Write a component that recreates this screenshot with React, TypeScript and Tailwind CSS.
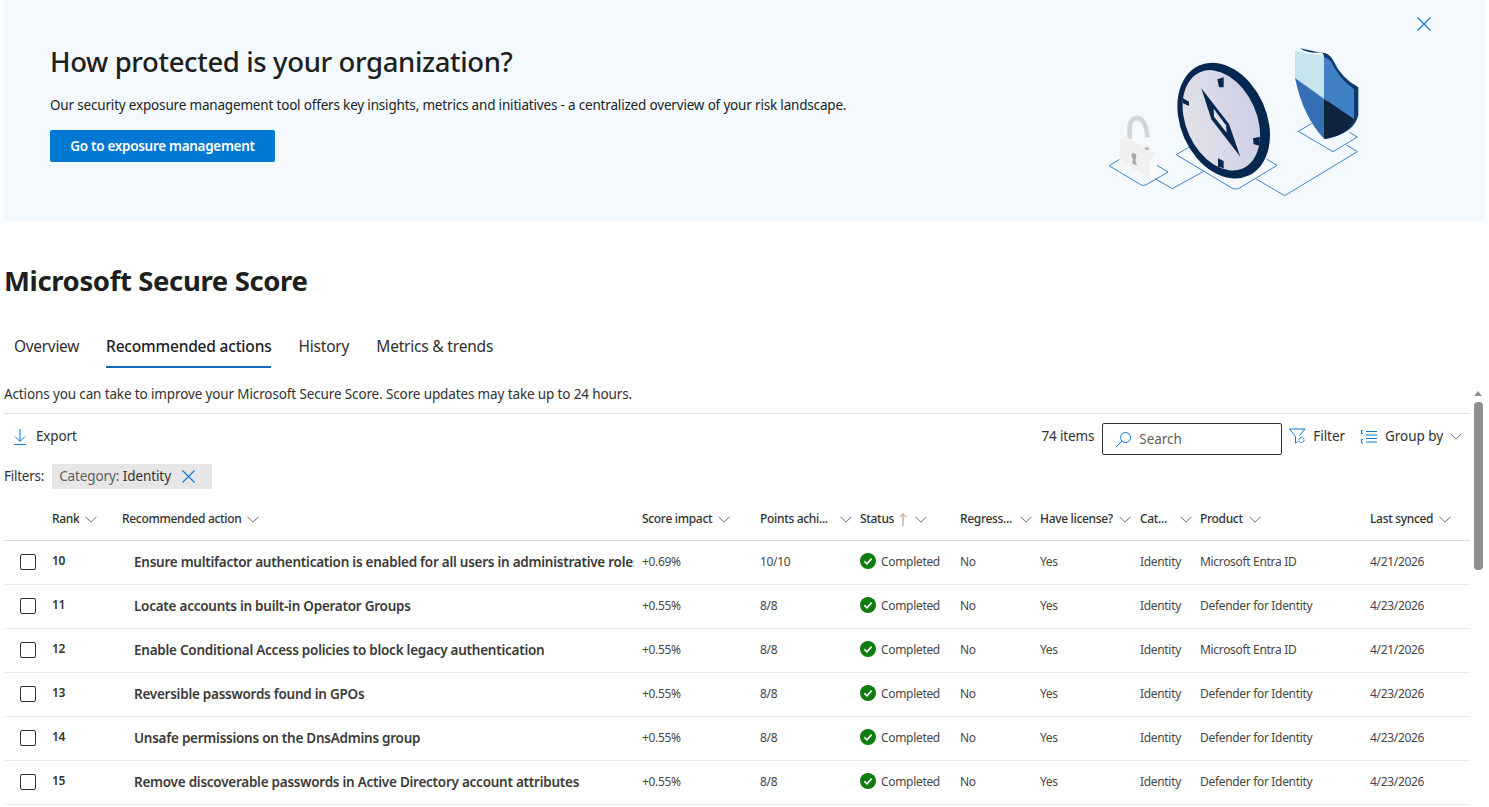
import React from "react";

const Chevron = ({ className = "" }: { className?: string }) => (
  <svg viewBox="0 0 12 7" className={"w-[12px] h-[7px] shrink-0 " + className} fill="none" stroke="currentColor" strokeWidth="0.9">
    <path d="M0.5 0.7 L6 6.2 L11.5 0.7" />
  </svg>
);

const X = ({ size = 13 }: { size?: number }) => (
  <svg width={size} height={size} viewBox="0 0 13 13" fill="none" stroke="#0f78d4" strokeWidth="1.1">
    <path d="M0.5 0.5 L12.5 12.5 M12.5 0.5 L0.5 12.5" />
  </svg>
);

const Illustration = () => (
  <svg viewBox="40 0 780 663" className="w-[260px] h-[221px] shrink-0">
    <defs>
      <linearGradient id="cg" x1="0" y1="0" x2="1" y2="0.3">
        <stop offset="0" stopColor="#e3e3e6" />
        <stop offset="1" stopColor="#cfd2e6" />
      </linearGradient>
    </defs>
    <g fill="none" stroke="#3f83cc" strokeWidth="3" strokeLinejoin="round">
      <path d="M90 478 L58 497 L155 555 Q162 558 170 554 L235 516 L200 495" />
      <path d="M198 537 L248 566 L340 515" />
      <path d="M310 434 L260 464 L428 565 Q438 570 450 564 L562 496 L530 477" />
      <path d="M498 536 L585 587 L803 455 L770 435" />
      <path d="M672 367 L626 394 L730 455 L803 411 L780 397" />
    </g>
    <path d="M120 418 L120 378 Q124 354 144 354 Q170 360 173 412" fill="none" stroke="#d4d4d4" strokeWidth="14" />
    <path d="M90 418 L108 409 L202 462 L202 520 L180 537 L90 480 Z" fill="#f0f0f0" />
    <path d="M180 480 L202 462 L202 520 L180 537 Z" fill="#fbfbfb" />
    <path d="M125 462 Q133 455 140 464 Q140 475 137 480 L142 497 L127 490 L130 478 Q125 472 125 462 Z" fill="#a8a8a8" />
    <ellipse cx="172" cy="446" rx="7" ry="4" fill="#b4b4b4" />
    <ellipse cx="402" cy="362" rx="129" ry="181" transform="rotate(-24 402 362)" fill="#06274f" />
    <ellipse cx="395" cy="361" rx="106" ry="158" transform="rotate(-24 395 361)" fill="url(#cg)" />
    <g fill="#06274f">
      <path d="M383 238 L402 232 L402 262 L388 262 Z" />
      <path d="M280 295 L298 305 L298 318 L280 310 Z" />
      <path d="M490 415 L510 410 L510 437 L492 433 Z" />
      <path d="M385 475 L402 483 L402 505 L385 500 Z" />
    </g>
    <path d="M335 265 L418 372 L452 470 L365 358 Z" fill="#06274f" />
    <path d="M372 326 L409 376 L411 398 L373 350 Z" fill="#e0e1ea" />
    <path d="M632 145 Q650 160 690 158 Q715 155 730 180 Q755 235 806 262 L806 345 Q795 400 705 418 L715 300 L700 160 Z" fill="#0f3a6d" />
    <path d="M616 150 Q650 165 703 165 L703 296 L616 234 Z" fill="#c5e4ec" />
    <path d="M703 172 Q722 175 735 205 Q760 245 793 268 L793 358 L703 296 Z" fill="#4080c4" />
    <path d="M616 234 L703 296 L703 416 Q640 350 616 234 Z" fill="#356fb6" />
    <path d="M703 296 L793 358 Q770 410 703 416 Z" fill="#10233f" />
  </svg>
);

type Row = { rank: number; title: string; impact: string; pts: string; product: string; date: string };

const rows: Row[] = [
  { rank: 10, title: "Ensure multifactor authentication is enabled for all users in administrative roles", impact: "+0.69%", pts: "10/10", product: "Microsoft Entra ID", date: "4/21/2026" },
  { rank: 11, title: "Locate accounts in built-in Operator Groups", impact: "+0.55%", pts: "8/8", product: "Defender for Identity", date: "4/23/2026" },
  { rank: 12, title: "Enable Conditional Access policies to block legacy authentication", impact: "+0.55%", pts: "8/8", product: "Microsoft Entra ID", date: "4/21/2026" },
  { rank: 13, title: "Reversible passwords found in GPOs", impact: "+0.55%", pts: "8/8", product: "Defender for Identity", date: "4/23/2026" },
  { rank: 14, title: "Unsafe permissions on the DnsAdmins group", impact: "+0.55%", pts: "8/8", product: "Defender for Identity", date: "4/23/2026" },
  { rank: 15, title: "Remove discoverable passwords in Active Directory account attributes", impact: "+0.55%", pts: "8/8", product: "Defender for Identity", date: "4/23/2026" },
];

const gridCols = "grid grid-cols-[48px_70px_520px_118px_100px_100px_80px_100px_60px_170px_100px]";

const Head = ({ label, w, arrow }: { label: string; w?: string; arrow?: boolean }) => (
  <div className="flex items-center gap-[6px] text-[12px] font-medium text-[#323130]">
    <span className={w}>{label}</span>
    {arrow && (
      <svg width="8" height="13" viewBox="0 0 8 13" fill="none" stroke="#b98d6c" strokeWidth="1" className="mr-[2px] -ml-[1px]">
        <path d="M4 13 V1 M0.8 4 L4 0.8 L7.2 4" />
      </svg>
    )}
    <Chevron className="text-[#605e5c]" />
  </div>
);

export default function App() {
  return (
    <div className="w-[1489px] h-[807px] overflow-hidden bg-white text-[#323130] font-['Noto_Sans','Open_Sans',sans-serif] tracking-[-0.02em]">
      <div className="mx-[4px] h-[221px] bg-[#f3f9fd] flex">
        <div className="flex-1 pl-[46px] pt-[41px]">
          <h2 className="text-[27.5px] leading-[42px] font-medium tracking-[-0.37px] text-[#201f1e]">How protected is your organization?</h2>
          <p className="mt-[12px] text-[13.5px] leading-[20px] tracking-[-0.18px] text-[#201f1e]">
            Our security exposure management tool offers key insights, metrics and initiatives - a centralized overview of your risk landscape.
          </p>
          <button className="mt-[15px] w-[225px] h-[32px] bg-[#0078d4] text-white text-[13.5px] tracking-[-0.3px] font-semibold rounded-[2px]">
            Go to exposure management
          </button>
        </div>
        <Illustration />
        <div className="w-[122px] flex justify-center pt-[17px]">
          <div className="h-[13px]"><X size={14} /></div>
        </div>
      </div>

      <h1 className="mt-[37px] ml-[4px] text-[27.5px] leading-[46px] tracking-[-0.37px] font-bold text-[#201f1e]">Microsoft Secure Score</h1>

      <div className="mt-[28px] ml-[14px] flex gap-[27px] text-[15.5px] tracking-[-0.2px] leading-[28px] h-[44px] text-[#323130]">
        <div className="tracking-[-0.32px]">Overview</div>
        <div className="h-[36px] border-b-2 border-[#0f6cbd] font-medium text-[#201f1e]">Recommended actions</div>
        <div>History</div>
        <div>Metrics &amp; trends</div>
      </div>

      <div className="flex h-[431px] overflow-hidden">
        <div className="w-[1470px] shrink-0 pl-[4px]">
          <p className="h-[38px] pt-[8px] text-[13.5px] tracking-[-0.13px] leading-[20px] border-b border-[#e1dfdd]">
            Actions you can take to improve your Microsoft Secure Score. Score updates may take up to 24 hours.
          </p>
          <div className="flex items-start h-[49px] text-[13.5px] tracking-[-0.05px]">
            <div className="flex items-center h-[45px] pl-[10px] text-[#323130]">
              <svg width="12" height="16" viewBox="0 0 12 16" fill="none" stroke="#0f78d4" strokeWidth="1">
                <path d="M6 0 V12 M1 7.5 L6 12.5 L11 7.5 M0 15.5 H12" />
              </svg>
              <span className="ml-[10px] tracking-[-0.15px]">Export</span>
            </div>
            <div className="ml-auto flex items-center h-[45px] pr-[8px]">
              <span className="mr-[8px] tracking-[-0.15px]">74 items</span>
              <div className="w-[180px] h-[32px] mt-[5px] border border-[#323130] rounded-[2px] flex items-center pl-[12px]">
                <svg width="17" height="17" viewBox="0 0 17 17" fill="none" stroke="#0f78d4" strokeWidth="1">
                  <circle cx="10.5" cy="6.5" r="5" />
                  <path d="M7 10 L1 16" />
                </svg>
                <span className="ml-[7px] text-[#605e5c]">Search</span>
              </div>
              <svg width="17" height="17" viewBox="0 0 17 17" fill="none" stroke="#0f78d4" strokeWidth="1" className="ml-[7px]">
                <path d="M0.5 1 H16 L10.5 7.5 M0.5 1 L6.5 8.5 V15 L8.5 13.5" />
                <circle cx="12.5" cy="12" r="2.6" strokeDasharray="2 0.6" />
              </svg>
              <span className="ml-[7px]">Filter</span>
              <svg width="16" height="14" viewBox="0 0 16 14" fill="none" stroke="#0f78d4" strokeWidth="1" className="ml-[16px]">
                <path d="M5 1.5 H16 M5 5 H16 M5 8.5 H16 M5 12 H16 M2 0.5 H0.5 V3.5 H2 M2 9.5 H0.5 V13 H2" />
              </svg>
              <span className="ml-[8px]">Group by</span>
              <Chevron className="ml-[7px] text-[#605e5c]" />
            </div>
          </div>
          <div className="flex items-center h-[26px] text-[13.5px] tracking-[-0.1px]">
            <span className="tracking-[-0.25px]">Filters:</span>
            <div className="ml-[8px] h-[25px] w-[160px] bg-[#e6e6e6] flex items-center pl-[7px]">
              <span className="text-[#605e5c]">Category:&nbsp;</span>
              <span className="text-[#323130]">Identity</span>
              <span className="ml-[11px] flex"><X size={13} /></span>
            </div>
          </div>
          <div className={gridCols + " h-[52px] items-center border-b border-[#e1dfdd] pt-[9px]"}>
            <div />
            <Head label="Rank" />
            <Head label="Recommended action" />
            <Head label="Score impact" />
            <Head label="Points achi..." w="w-[74px]" />
            <Head label="Status" arrow />
            <Head label="Regress..." w="w-[54px]" />
            <Head label="Have license?" />
            <Head label="Cat..." w="w-[34px]" />
            <Head label="Product" />
            <Head label="Last synced" />
          </div>
          {rows.map((r) => (
            <div key={r.rank} className={gridCols + " h-[44px] pb-[2px] items-center border-b border-[#edebe9] text-[12px] text-[#484644]"}>
              <div className="pl-[16px] flex mt-[1px]"><span className="w-[16px] h-[16px] border border-[#323130] rounded-[2px]" /></div>
              <div className="font-semibold text-[#323130] mb-[1px]">{r.rank}</div>
              <div className="pl-[12px] pr-[8px] pt-[1px]">
                <div className="text-[13.5px] tracking-[-0.25px] font-semibold text-[#3b3a39] whitespace-nowrap overflow-hidden">{r.title}</div>
              </div>
              <div>{r.impact}</div>
              <div>{r.pts}</div>
              <div className="flex items-center gap-[5px]">
                <svg width="16" height="16" viewBox="0 0 16 16" className="mb-[1px]">
                  <circle cx="8" cy="8" r="8" fill="#107c10" />
                  <path d="M4.4 8.3 L7 10.8 L11.6 5.6" fill="none" stroke="#fff" strokeWidth="1.6" />
                </svg>
                <span>Completed</span>
              </div>
              <div>No</div>
              <div>Yes</div>
              <div>Identity</div>
              <div>{r.product}</div>
              <div>{r.date}</div>
            </div>
          ))}
        </div>
        <div className="w-[19px] pl-[3px] pt-[9px] flex flex-col items-start">
          <div className="w-[10px] h-[17px] pb-[1px] flex items-center justify-center">
            <div className="w-0 h-0 border-x-[4px] border-x-transparent border-b-[5px] border-b-[#8f8f8f]" />
          </div>
          <div className="w-[9px] h-[168px] bg-[#8f8f8f] rounded-[4px] ml-[0.5px]" />
        </div>
      </div>
    </div>
  );
}
